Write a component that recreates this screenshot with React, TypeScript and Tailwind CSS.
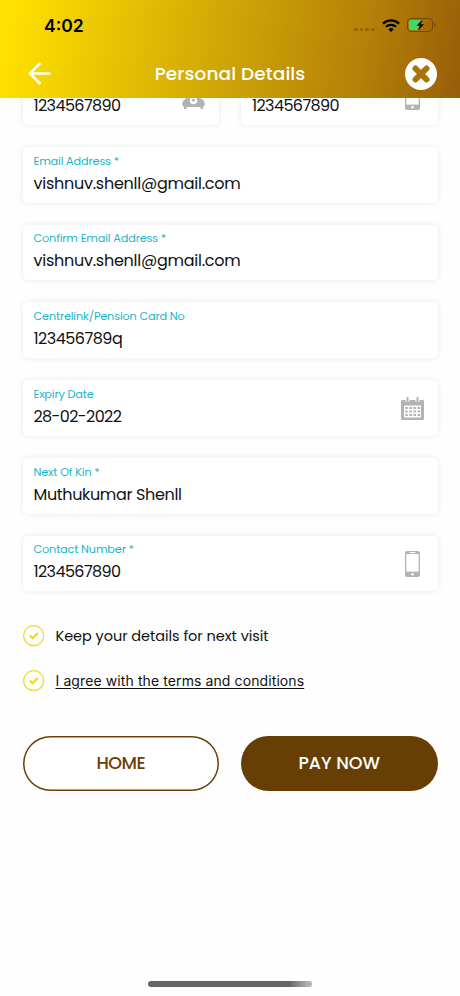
import type { ReactNode } from 'react'

type FieldProps = {
  label?: string
  value: string
  valueClass?: string
  icon?: ReactNode
}

const PhoneIcon = () => (
  <svg className="w-[15px] h-[26px]" viewBox="0 0 15 26">
    <rect width="15" height="26" rx="2" fill="#b3b3b3" />
    <rect x="1.3" y="3" width="12.4" height="17.6" fill="#fff" />
    <rect x="4.5" y="1" width="6" height="1" rx="0.5" fill="#fff" />
    <circle cx="7.5" cy="23.2" r="1.3" fill="#fff" />
  </svg>
)

const TelephoneIcon = () => (
  <svg className="w-[23px] h-[22px] mt-0.5" viewBox="0 0 23 22">
    <path
      fill="#b3b3b3"
      d="M1 7C1 2 5 0 11.500 0S22 2 22 7v1h-5V5H6v3H1zM7 7h9l1 3 4 3c1.300 1 1.700 2.500 1.700 4.500 0 1.500-.7 2-1.700 2V22h-2.500v-2h-14v2H2v-2.500c-1 0-1.700-.5-1.700-2C.3 15.500.7 14 2 13l4-3z"
    />
    <circle cx="11.500" cy="13.500" r="3.700" fill="#fff" />
    <circle cx="11.500" cy="13" r="1.600" fill="#b3b3b3" />
  </svg>
)

const CalendarIcon = () => (
  <svg className="w-[23px] h-[23px] mt-px" viewBox="0 0 23 23">
    <rect y="3" width="23" height="20" rx="1.200" fill="#b3b3b3" />
    <rect x="3" y="8.500" width="17" height="12" fill="#fff" />
    <path d="M6.500 0v5M16.500 0v5" stroke="#fff" strokeWidth="4" />
    <path d="M6.500 .8v4M16.500 .8v4" stroke="#b3b3b3" strokeWidth="2" strokeLinecap="round" />
    <path
      d="M4.200 11h15M4.200 14.500h15M4.200 18h15"
      stroke="#b3b3b3"
      strokeWidth="2.200"
      strokeDasharray="2.600 1.530"
    />
  </svg>
)

const CheckIcon = () => (
  <svg className="w-[22px] h-[22px]" viewBox="0 0 22 22" fill="none">
    <circle cx="10.700" cy="10.700" r="10" stroke="#eddb3c" strokeWidth="1.200" />
    <path d="M6.800 10.500l2.900 2.800 5-5.200" stroke="#f0d81c" strokeWidth="2.200" />
  </svg>
)

const Field = ({ label, value, valueClass = 'tracking-[-0.250px]', icon }: FieldProps) => (
  <div className="h-[55.750px] rounded-[5px] bg-white shadow-[0_0_6px_rgba(0,0,0,0.09)] pl-[11px] pr-[14px] flex items-center justify-between">
    <div className="whitespace-nowrap pb-[2px]">
      <div className="h-[18px] text-[11.300px] leading-[18px] tracking-[-0.170px] text-[#19b5cb]">{label}</div>
      <div className={`h-[26px] text-[16px] leading-[27px] text-[#111] ${valueClass}`}>{value}</div>
    </div>
    {icon}
  </div>
)

const StatusBar = () => (
  <div className="h-[50px] pl-11 pr-[24px] flex items-center justify-between">
    <span className="text-[17.500px] leading-none font-semibold font-['Inter',sans-serif] text-black pt-px">4:02</span>
    <div className="flex items-center">
      <div className="flex gap-[2px] mt-[9px] mr-[7px]">
        <i className="size-[3.800px] rounded-full bg-[#936700]" />
        <i className="size-[3.800px] rounded-full bg-[#936700]" />
        <i className="size-[3.800px] rounded-full bg-[#936700]" />
        <i className="size-[3.800px] rounded-full bg-[#936700]" />
      </div>
      <svg className="w-[18px] h-[13px] mr-[7px]" viewBox="0 0 18 13" fill="none" stroke="#000">
        <path d="M1 4.600a11.500 11.500 0 0 1 16 0" strokeWidth="2.300" />
        <path d="M4 7.800a7.200 7.200 0 0 1 10 0" strokeWidth="2.200" />
        <path d="M9 13l-2.700-2.700a3.900 3.900 0 0 1 5.400 0z" fill="#000" stroke="none" />
      </svg>
      <svg className="w-[29px] h-[14px]" viewBox="0 0 29 14">
        <rect x=".5" y=".5" width="25" height="13" rx="3.500" fill="none" stroke="#754a00" />
        <path d="M3.500 2H14l-4 5.500h2.500L10.500 12h-7A1.500 1.500 0 0 1 2 10.500v-7A1.500 1.500 0 0 1 3.500 2z" fill="#40d968" />
        <path d="M15.500 1.500L9.500 7.800h3.300L11 12.500l6-6.300h-3.300z" fill="#000" />
        <path d="M27 4.800c2 .6 2 3.800 0 4.400z" fill="#754a00" />
      </svg>
    </div>
  </div>
)

const App = () => {
  return (
    <div className="h-[996px] overflow-hidden bg-[#fefefe] flex flex-col font-['Poppins','Inter',sans-serif]">
      <header className="relative z-10 h-[98px] shrink-0 bg-[linear-gradient(100deg,#ffe000_3%,#d0a806_47%,#b58108_78%,#985d09_100%)]">
        <StatusBar />
        <div className="h-12 pl-[28px] pr-[23px] flex items-center justify-between">
          <svg className="w-[23px] h-[23px] -mt-0.5" viewBox="0 0 23 23" fill="none" stroke="#fff" strokeWidth="2.600">
            <path d="M12.300 1L2 11.500 12.300 22M2 11.500h20.500" />
          </svg>
          <h1 className="text-[18.500px] leading-none font-medium tracking-[0.100px] text-white pl-[4px]">
            Personal Details
          </h1>
          <svg className="w-8 h-8" viewBox="0 0 32 32">
            <circle cx="16" cy="16" r="16" fill="#fff" />
            <path d="M10.500 10.500l11 11M21.500 10.500l-11 11" stroke="#a8740a" strokeWidth="6" strokeLinecap="round" />
          </svg>
        </div>
      </header>

      <main className="-mt-[29px] px-[22.500px]">
        <div className="flex flex-col gap-[22px]">
          <div className="grid grid-cols-2 gap-[22px]">
            <Field value="1234567890" valueClass="tracking-[-0.600px]" icon={<TelephoneIcon />} />
            <Field
              value="1234567890"
              valueClass="tracking-[-0.600px]"
              icon={<div className="pr-1 pt-px"><PhoneIcon /></div>}
            />
          </div>
          <Field label="Email Address *" value="vishnuv.shenll@gmail.com" />
          <Field label="Confirm Email Address *" value="vishnuv.shenll@gmail.com" />
          <Field label="Centrelink/Pension Card No" value="123456789q" valueClass="tracking-[-0.500px]" />
          <Field label="Expiry Date" value="28-02-2022" valueClass="tracking-[-0.600px]" icon={<CalendarIcon />} />
          <Field label="Next Of Kin *" value="Muthukumar Shenll" valueClass="tracking-[-0.350px]" />
          <Field
            label="Contact Number *"
            value="1234567890"
            valueClass="tracking-[-0.600px]"
            icon={<div className="pr-1 pt-px"><PhoneIcon /></div>}
          />
        </div>

        <div className="mt-[34px] flex flex-col gap-[22.500px] text-[14.500px] leading-[22px] text-[#111]">
          <div className="flex items-center gap-[11px]">
            <CheckIcon />
            <span className="tracking-[-0.050px]">Keep your details for next visit</span>
          </div>
          <div className="flex items-center gap-[11px]">
            <CheckIcon />
            <span className="font-['Inter',sans-serif] text-[14px] tracking-[0.100px] underline underline-offset-2">
              I agree with the terms and conditions
            </span>
          </div>
        </div>

        <div className="mt-[44px] grid grid-cols-2 gap-[22px] text-[17.500px] font-medium">
          <button className="h-[55.500px] rounded-full shadow-[inset_0_0_0_1.500px_#6a4005] bg-white text-[#6a4005] tracking-[-0.500px]">
            HOME
          </button>
          <button className="h-[55.500px] rounded-full bg-[#673f05] text-white">PAY NOW</button>
        </div>
      </main>

      <div className="mt-auto mb-[9.500px] ml-[148px] w-[164px] h-[5.500px] rounded-full bg-[linear-gradient(90deg,#666_86%,#b5b5b5_98%)]" />
    </div>
  )
}

export default App
